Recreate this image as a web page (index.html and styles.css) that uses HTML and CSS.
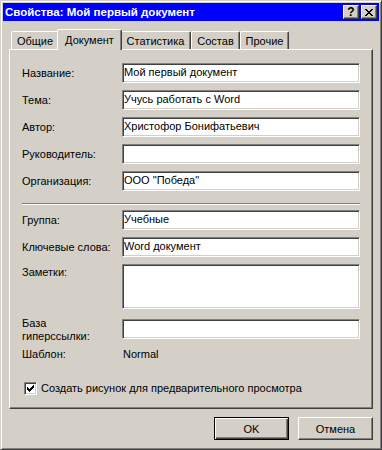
FILE: index.html
```html
<!DOCTYPE html>
<html lang="ru">

<head>
  <meta charset="utf-8" />
  <title>Свойства: Мой первый документ</title>
  <link rel="stylesheet" href="styles.css">
</head>

<body>

  <div class="window">

    <div class="titlebar">
      <span class="title">Свойства: Мой первый документ</span>
      <div class="title-buttons">
        <span class="tbtn help">?</span>
        <span class="tbtn close">
          <svg width="8" height="7" viewBox="0 0 8 7" shape-rendering="crispEdges">
            <path d="M0 0h2v1H0z M6 0h2v1H6z M1 1h2v1H1z M5 1h2v1H5z M2 2h4v1H2z M3 3h2v1H3z M2 4h4v1H2z M1 5h2v1H1z M5 5h2v1H5z M0 6h2v1H0z M6 6h2v1H6z" fill="#000" />
          </svg>
        </span>
      </div>
    </div>

    <div class="tabs">
      <div class="tab tab-general">Общие</div>
      <div class="tab tab-doc active">Документ</div>
      <div class="tab tab-stats">Статистика</div>
      <div class="tab tab-parts">Состав</div>
      <div class="tab tab-other">Прочие</div>
    </div>

    <div class="panel">
      <div class="row first">
        <label>Название:</label>
        <div class="field">Мой первый документ</div>
      </div>
      <div class="row">
        <label>Тема:</label>
        <div class="field">Учусь работать с Word</div>
      </div>
      <div class="row">
        <label>Автор:</label>
        <div class="field">Христофор Бонифатьевич</div>
      </div>
      <div class="row">
        <label>Руководитель:</label>
        <div class="field"></div>
      </div>
      <div class="row">
        <label>Организация:</label>
        <div class="field">ООО "Победа"</div>
      </div>

      <div class="separator"></div>

      <div class="row first">
        <label>Группа:</label>
        <div class="field">Учебные</div>
      </div>
      <div class="row">
        <label>Ключевые слова:</label>
        <div class="field">Word документ</div>
      </div>
      <div class="row top">
        <label>Заметки:</label>
        <div class="field notes"></div>
      </div>
      <div class="row top link-row">
        <label>База<br>гиперссылки:</label>
        <div class="field"></div>
      </div>
      <div class="row template-row">
        <label>Шаблон:</label>
        <span class="value">Normal</span>
      </div>

      <div class="check-row">
        <span class="checkbox">
          <svg width="9" height="9" viewBox="0 0 9 9" shape-rendering="crispEdges">
            <path d="M7 1h1v3H7z M6 2h1v3H6z M1 3h1v3H1z M5 3h1v3H5z M2 4h1v3H2z M4 4h1v3H4z M3 5h1v3H3z" fill="#000" />
          </svg>
        </span>
        <span>Создать рисунок для предварительного просмотра</span>
      </div>
    </div>

    <div class="buttons">
      <div class="btn default">OK</div>
      <div class="btn">Отмена</div>
    </div>

  </div>

</body>

</html>
```

FILE: styles.css
```css
* {
  margin: 0;
  padding: 0;
  box-sizing: border-box;
}

body {
  background: #d4d0c8;
  font-family: Tahoma, "Liberation Sans", Arial, sans-serif;
  font-size: 11px;
  color: #000000;
}

.window {
  width: 382px;
  height: 450px;
  padding: 2px;
  background: #d4d0c8;
  border: 1px solid;
  border-color: #d4d0c8 #404040 #404040 #d4d0c8;
  box-shadow: inset 1px 1px #ffffff, inset -1px -1px #808080;
}

/* title bar */
.titlebar {
  height: 18px;
  background: #0000ff;
  display: flex;
  align-items: center;
  justify-content: space-between;
  padding: 0 2px;
}

.title {
  color: #ffffff;
  font-weight: bold;
  font-size: 11.5px;
  white-space: nowrap;
}

.title-buttons {
  display: flex;
  gap: 2px;
}

.tbtn {
  width: 16px;
  height: 14px;
  display: flex;
  align-items: center;
  justify-content: center;
  background: #d4d0c8;
  border: 1px solid;
  border-color: #ffffff #404040 #404040 #ffffff;
  box-shadow: inset -1px -1px #808080;
}

.help {
  font-weight: bold;
  font-size: 12px;
  line-height: 12px;
}

/* tabs */
.tabs {
  display: flex;
  align-items: flex-end;
  height: 20px;
  margin-top: 8px;
  padding-left: 8px;
  position: relative;
  z-index: 1;
}

.tab {
  height: 18px;
  display: flex;
  align-items: center;
  justify-content: center;
  background: #d4d0c8;
  border-top: 1px solid #ffffff;
  border-left: 1px solid #ffffff;
  border-right: 1px solid #404040;
  border-radius: 2px 2px 0 0;
  box-shadow: inset -1px 0 #808080;
  padding-top: 1px;
}

.tab.active {
  height: 21px;
  margin: 0 -2px -1px -2px;
  padding-bottom: 2px;
  position: relative;
}

.tab-general { width: 48px; }
.tab-doc { width: 65px; }
.tab-stats { width: 71px; }
.tab-parts { width: 49px; }
.tab-other { width: 49px; }

/* panel */
.panel {
  height: 360px;
  margin: 0 6px;
  padding: 13px 12px 0 12px;
  border: 1px solid;
  border-color: #ffffff #404040 #404040 #ffffff;
  box-shadow: inset -1px -1px #808080;
}

.row {
  display: flex;
  align-items: center;
  margin-top: 7px;
}

.row.first {
  margin-top: 0;
}

.row.top {
  align-items: flex-start;
}

.row label {
  width: 100px;
  flex-shrink: 0;
  line-height: 13px;
}

.row.top label {
  margin-top: 2px;
}

.field {
  width: 238px;
  height: 20px;
  background: #ffffff;
  padding: 0 1px;
  line-height: 16px;
  border: 1px solid;
  border-color: #808080 #ffffff #ffffff #808080;
  box-shadow: inset 1px 1px #404040, inset -1px -1px #d4d0c8;
  white-space: nowrap;
}

.field.notes {
  height: 45px;
}

.link-row {
  margin-top: 10px;
}

.link-row label {
  margin-top: -2px !important;
}

.template-row {
  margin-top: 5px;
  line-height: 13px;
}

.value {
  padding-left: 1px;
}

.separator {
  height: 2px;
  margin: 12px 0 5px 0;
  border-top: 1px solid #808080;
  border-bottom: 1px solid #ffffff;
}

.check-row {
  display: flex;
  align-items: center;
  gap: 4px;
  margin-top: 21px;
  padding-left: 2px;
  line-height: 13px;
}

.checkbox {
  width: 13px;
  height: 13px;
  display: flex;
  align-items: center;
  justify-content: center;
  background: #ffffff;
  border: 1px solid;
  border-color: #808080 #ffffff #ffffff #808080;
  box-shadow: inset 1px 1px #404040, inset -1px -1px #d4d0c8;
}

/* bottom buttons */
.buttons {
  display: flex;
  justify-content: flex-end;
  gap: 9px;
  margin-top: 8px;
  padding-right: 6px;
}

.btn {
  width: 75px;
  height: 23px;
  display: flex;
  align-items: center;
  justify-content: center;
  border: 1px solid;
  border-color: #ffffff #404040 #404040 #ffffff;
  box-shadow: inset -1px -1px #808080;
}

.btn.default {
  border-color: #000000;
  box-shadow: inset 1px 1px #ffffff, inset -1px -1px #404040, inset -2px -2px #808080;
}
```
